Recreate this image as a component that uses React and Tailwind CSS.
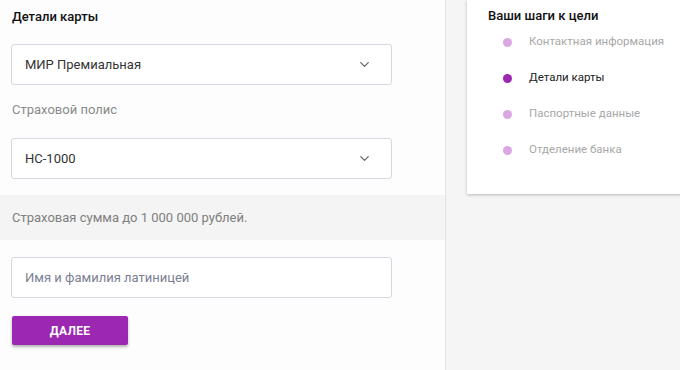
import React from 'react';
import { ChevronDown } from 'lucide-react';

const steps = [
    { label: 'Контактная информация', active: false },
    { label: 'Детали карты', active: true },
    { label: 'Паспортные данные', active: false },
    { label: 'Отделение банка', active: false },
];

function Select({ value }) {
    return (
        <div className="ml-[11px] w-[381px] h-[41px] flex items-center justify-between pl-[13px] pr-[19px] border border-[#d5d7e2] rounded-[3px] bg-white">
            <span className="text-[13px] text-[#333]">{value}</span>
            <ChevronDown size={15} strokeWidth={2} className="text-[#666]" />
        </div>
    );
}

export default function App() {
    return (
        <div className="flex w-[680px] h-[370px] overflow-hidden bg-[#f5f5f5]" style={{ fontFamily: 'Roboto, "Noto Sans", sans-serif' }}>
            <div className="w-[446px] shrink-0 bg-[#fdfdfd] border-r border-[#e2e2e2]">
                <div className="pt-[7px] pl-[12px] text-[13px] leading-[20px] font-medium text-[#111]">Детали карты</div>
                <div className="mt-[17px]"><Select value="МИР Премиальная" /></div>
                <div className="mt-[15px] pl-[12px] text-[13px] leading-[20px] text-[#8a8a8a]">Страховой полис</div>
                <div className="mt-[18px]"><Select value="НС-1000" /></div>
                <div className="mt-[16px] h-[45px] flex items-center pl-[12px] bg-[#f4f4f4] text-[13px] text-[#808080]">
                    Страховая сумма до 1 000 000 рублей.
                </div>
                <div className="mt-[17px] ml-[11px] w-[381px] h-[41px] flex items-center pl-[13px] border border-[#d5d7e2] rounded-[3px] bg-white text-[13px] text-[#7b7f93]">
                    Имя и фамилия латиницей
                </div>
                <button className="mt-[18px] ml-[12px] w-[116px] h-[29px] rounded-[2px] bg-[#9c27b0] text-white text-[12px] font-bold tracking-wide shadow-[0_2px_3px_rgba(0,0,0,0.3)]">
                    ДАЛЕЕ
                </button>
            </div>
            <div className="flex-1 pl-[21px]">
                <div className="w-[260px] h-[194px] bg-white shadow-[0_1px_3px_rgba(0,0,0,0.25)] pt-[6px] pl-[21px]">
                    <div className="text-[13px] leading-[20px] font-medium text-[#111]">Ваши шаги к цели</div>
                    <div className="mt-[6px] flex flex-col gap-[16px]">
                        {steps.map((s) => (
                            <div key={s.label} className="flex items-center h-[20px] pl-[15px]">
                                <span className={`w-[9px] h-[9px] rounded-full ${s.active ? 'bg-[#9c27b0]' : 'bg-[#dba6e3]'}`} />
                                <span className={`ml-[17px] text-[11.5px] ${s.active ? 'text-[#222]' : 'text-[#a8a8a8]'}`}>{s.label}</span>
                            </div>
                        ))}
                    </div>
                </div>
            </div>
        </div>
    );
}
